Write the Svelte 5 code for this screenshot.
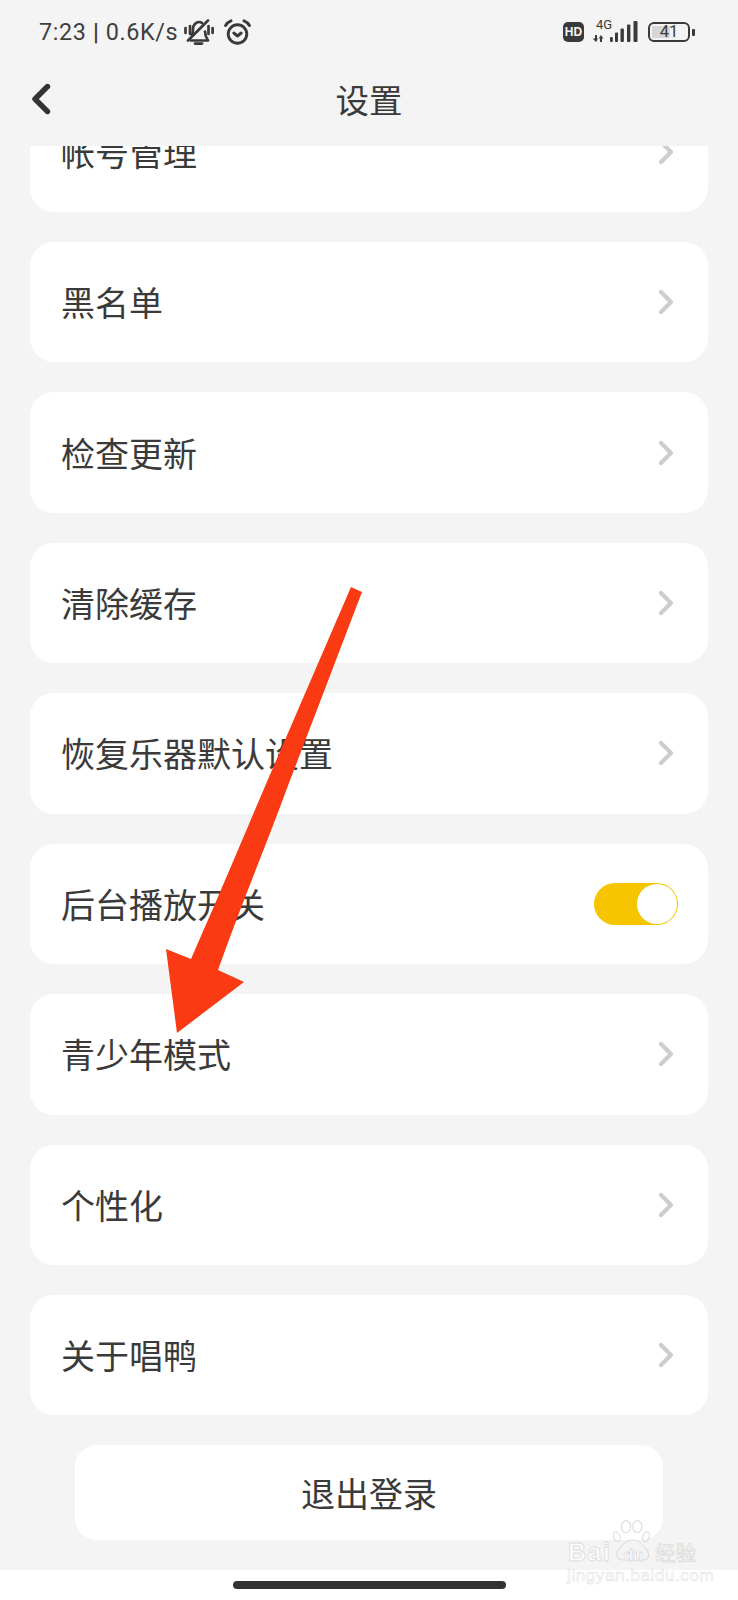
<script>
  const rows = [
    { label: '帐号管理' },
    { label: '黑名单' },
    { label: '检查更新' },
    { label: '清除缓存' },
    { label: '恢复乐器默认设置' },
    { label: '后台播放开关', toggle: true },
    { label: '青少年模式' },
    { label: '个性化' },
    { label: '关于唱鸭' }
  ];
</script>

<div class="phone">
  <header class="top">
    <div class="status">
      <div class="status-left">
        <span class="time">7:23 <b>|</b> 0.6K/s</span>
        <svg class="bell" viewBox="0 0 30 26" fill="none" stroke="#3a3a3a" stroke-width="2.7" stroke-linecap="round" stroke-linejoin="round">
          <path d="M4 21.5 24 1.5" />
          <path d="M7 21.5h17c-2-3-3-5-3-9M8 16c1-2 1-4 1-6 0-4 3-7 6-7 1 0 2 0 3 1" />
          <path d="M11 24.6h7" />
          <path d="M1.5 9v5M6 7v8M24.5 7v8M28.6 9v5" />
        </svg>
        <svg class="alarm" viewBox="0 0 27 26" fill="none" stroke="#3a3a3a" stroke-width="2.9" stroke-linecap="round" stroke-linejoin="round">
          <circle cx="13.5" cy="15" r="9.3" />
          <path d="M1.6 6.5C3 4 5 2.5 7 1.8M25.4 6.5C24 4 22 2.5 20 1.8" />
          <path d="M9.8 14 13.5 17l3.7-3" />
        </svg>
      </div>
      <div class="status-right">
        <span class="hd">HD</span>
        <div class="signal">
          <span class="net">4G</span>
          <svg viewBox="0 0 46 22" fill="#3a3a3a">
            <path d="M3 14h2v3.5h1L4 21 .6 17.5H3zM8 21h2v-3.5h1.4L9 14l-2.4 3.5H8z" />
            <rect x="18" y="16" width="2.8" height="5" rx="1" />
            <rect x="23" y="11.5" width="3" height="9.5" rx="1" />
            <rect x="28.5" y="7.5" width="3.4" height="13.5" rx="1" />
            <rect x="35" y="3.5" width="3.4" height="17.5" rx="1" />
            <rect x="41.5" y="0" width="4" height="21" rx="1" />
          </svg>
        </div>
        <div class="battery">
          <div class="cell"><span class="fill"></span><span class="level">41</span></div>
          <span class="nub"></span>
        </div>
      </div>
    </div>
    <div class="title-bar">
      <svg class="back" viewBox="0 0 20 32" fill="none" stroke="#333" stroke-width="5.4" stroke-linecap="round" stroke-linejoin="round">
        <path d="M16.5 3.5 4 16l12.5 12.5" />
      </svg>
      <h1>设置</h1>
    </div>
  </header>

  <main class="viewport">
    <div class="list">
      {#each rows as row}
        <div class="card">
          <span class="label">{row.label}</span>
          {#if row.toggle}
            <span class="switch"><span class="knob"></span></span>
          {:else}
            <svg class="chev" viewBox="0 0 16 26" fill="none" stroke="#cdcdcd" stroke-width="4.2" stroke-linecap="round" stroke-linejoin="round">
              <path d="M3 3l10 10L3 23" />
            </svg>
          {/if}
        </div>
      {/each}
      <div class="logout">退出登录</div>
    </div>
  </main>

  <footer class="nav"><span class="home"></span></footer>

  <svg class="arrow" viewBox="0 0 738 1600">
    <path fill="#f93a12" d="M351 587 362 592 289 783C267 843 241 905 218 970L244 982 177 1033 166 949 191 959C215 905 243 838 269 777Z" />
  </svg>

  <div class="mark">
    <svg class="paw" viewBox="0 0 38 41" fill="none" stroke="#dedede" stroke-width="1.2">
      <ellipse cx="3.7" cy="16.7" rx="3.2" ry="5" transform="rotate(-20 3.7 16.7)" />
      <ellipse cx="13" cy="6.7" rx="4.6" ry="6" />
      <ellipse cx="24.3" cy="6.7" rx="4.6" ry="6" />
      <ellipse cx="33" cy="16.7" rx="3.2" ry="5" transform="rotate(20 33 16.7)" />
      <path d="M20 20c6 0 8 3 12 8 5 5 5 12-2 12H10c-7 0-8-7-3-12 4-5 6-8 13-8Z" />
    </svg>
    <div class="mark-top"><span class="bai">Bai</span><span class="du">du</span><span class="jy">经验</span></div>
    <div class="mark-url">jingyan.baidu.com</div>
  </div>
</div>

<style>
  :global(body) {
    margin: 0;
    background: #fff;
  }
  .phone {
    position: relative;
    width: 738px;
    height: 1600px;
    overflow: hidden;
    display: flex;
    flex-direction: column;
    background: #fff;
    font-family: "Noto Sans CJK SC", "Noto Sans", sans-serif;
    color: #333;
  }
  .top {
    height: 146px;
    flex: none;
    background: #f4f4f4;
    display: flex;
    flex-direction: column;
  }
  .status {
    height: 64px;
    display: flex;
    justify-content: space-between;
    align-items: center;
    padding: 0 43px 0 39px;
  }
  .status-left {
    display: flex;
    align-items: center;
  }
  .time {
    font-family: Roboto, "Noto Sans", sans-serif;
    font-size: 23.4px;
    letter-spacing: 0.6px;
    color: #3f3f3f;
    white-space: nowrap;
  }
  .time b {
    font-weight: 700;
  }
  .bell {
    width: 30px;
    height: 26px;
    margin-left: 6px;
  }
  .alarm {
    width: 27px;
    height: 26px;
    margin-left: 10px;
  }
  .status-right {
    display: flex;
    align-items: center;
  }
  .hd {
    width: 21px;
    height: 20px;
    border-radius: 5px;
    background: #3a3a3a;
    color: #f4f4f4;
    font: 700 12px/20px "Liberation Sans", sans-serif;
    text-align: center;
  }
  .signal {
    position: relative;
    width: 46px;
    height: 22px;
    margin-left: 8px;
  }
  .signal svg {
    display: block;
    width: 46px;
    height: 22px;
  }
  .net {
    position: absolute;
    left: 4px;
    top: -3px;
    font: 13px/14px Roboto, sans-serif;
    color: #3a3a3a;
  }
  .battery {
    display: flex;
    align-items: center;
    margin-left: 10px;
  }
  .cell {
    position: relative;
    width: 42px;
    height: 20px;
    box-sizing: border-box;
    border: 2px solid #3a3a3a;
    border-radius: 6px;
  }
  .fill {
    position: absolute;
    left: 2px;
    top: 2px;
    bottom: 2px;
    width: 18px;
    background: #d6d6d6;
  }
  .level {
    position: absolute;
    inset: 0;
    text-align: center;
    font: 16.5px/16px Roboto, sans-serif;
    color: #3a3a3a;
  }
  .nub {
    width: 3px;
    height: 7px;
    margin-left: 2px;
    background: #3a3a3a;
    border-radius: 1px;
  }
  .title-bar {
    position: relative;
    flex: 1;
    display: flex;
    align-items: center;
    justify-content: center;
    padding-bottom: 12px;
  }
  .back {
    position: absolute;
    left: 31px;
    top: 19px;
    width: 20px;
    height: 32px;
  }
  h1 {
    margin: 0;
    font-size: 33.5px;
    font-weight: 400;
    line-height: 44px;
    color: #3a3a3a;
  }
  .viewport {
    height: 1424px;
    flex: none;
    overflow: hidden;
    background: #f4f4f4;
  }
  .list {
    margin-top: -54.5px;
    padding: 0 30px;
    display: flex;
    flex-direction: column;
    gap: 30px;
  }
  .card {
    height: 120.45px;
    flex: none;
    box-sizing: border-box;
    padding: 0 30px 0 31px;
    background: #fff;
    border-radius: 24px;
    display: flex;
    align-items: center;
    justify-content: space-between;
  }
  .label {
    font-size: 34px;
    line-height: 46px;
    color: #3a3a3a;
    white-space: nowrap;
  }
  .chev {
    width: 16px;
    height: 26px;
    margin-right: 4px;
  }
  .switch {
    position: relative;
    width: 84px;
    height: 42px;
    box-sizing: border-box;
    border-radius: 21px;
    background: #f6c500;
  }
  .knob {
    position: absolute;
    right: 1px;
    top: 1px;
    width: 40px;
    height: 40px;
    border-radius: 50%;
    background: #fff;
  }
  .logout {
    height: 95px;
    flex: none;
    margin: 0 45px;
    border-radius: 22px;
    background: #fff;
    font-size: 34px;
    display: flex;
    align-items: center;
    justify-content: center;
    color: #3a3a3a;
  }
  .nav {
    height: 30px;
    flex: none;
    background: #fff;
    display: flex;
    justify-content: center;
    padding-top: 11px;
    box-sizing: border-box;
  }
  .home {
    width: 273px;
    height: 7.5px;
    border-radius: 4px;
    background: #333;
  }
  .arrow {
    position: absolute;
    left: 0;
    top: 0;
    width: 738px;
    height: 1600px;
    pointer-events: none;
  }
  .mark {
    position: absolute;
    left: 566px;
    top: 1518px;
    width: 140px;
    height: 66px;
  }
  .paw {
    position: absolute;
    left: 47px;
    top: 2px;
    width: 38px;
    height: 41px;
  }
  .mark-top {
    position: absolute;
    left: 2px;
    top: 18px;
    display: flex;
    align-items: baseline;
    font-family: "Liberation Sans", sans-serif;
    color: rgba(255, 255, 255, 0.85);
    -webkit-text-stroke: 0.8px #dcdcdc;
    white-space: nowrap;
  }
  .bai {
    font-size: 25px;
    font-weight: 700;
    line-height: 32px;
    letter-spacing: 1.5px;
  }
  .du {
    font-size: 16px;
    font-weight: 700;
    margin-left: 12px;
  }
  .jy {
    font-family: "Noto Sans CJK SC", sans-serif;
    font-size: 20.5px;
    line-height: 32px;
    margin-left: 12px;
  }
  .mark-url {
    position: absolute;
    left: 1px;
    top: 49px;
    font: 17px/18px "Liberation Sans", sans-serif;
    letter-spacing: 0.6px;
    color: #fff;
    -webkit-text-stroke: 0.5px #dedede;
    white-space: nowrap;
  }
</style>
